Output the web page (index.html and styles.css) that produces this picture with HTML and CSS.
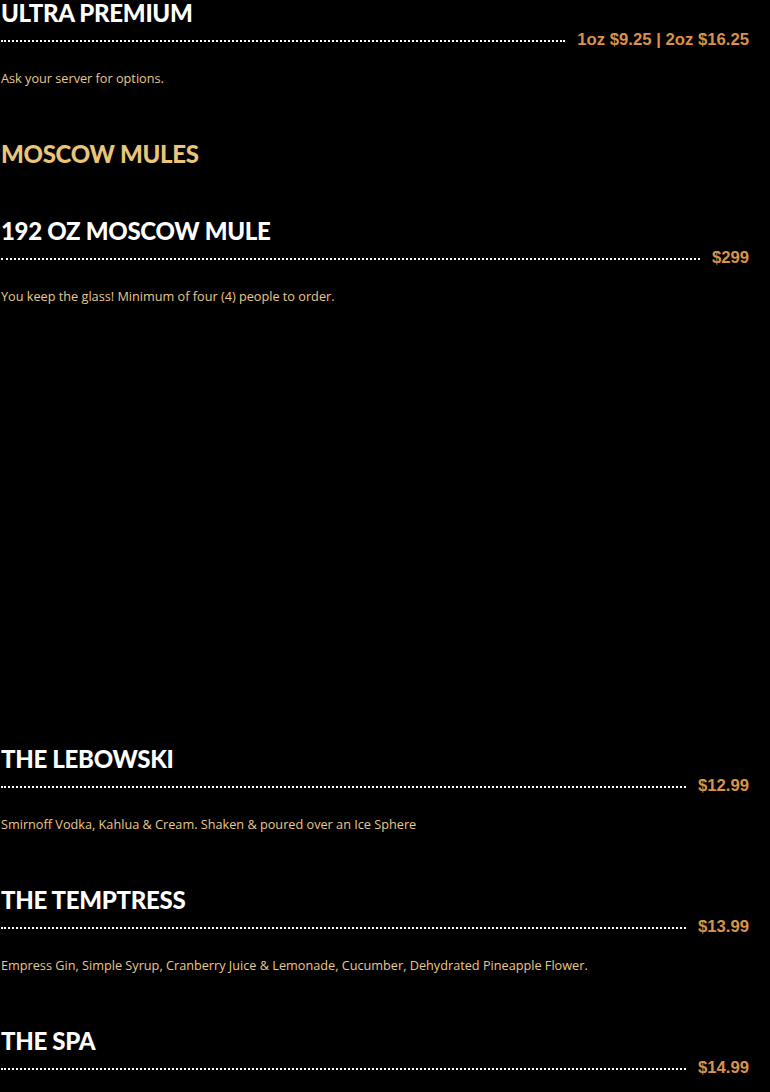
FILE: index.html
```html
<!DOCTYPE html>
<html>
<head>
<meta charset="utf-8">
<link rel="stylesheet" href="styles.css">
</head>
<body>
<div class="menu">
  <div class="item">
    <h3 class="item-name">ULTRA PREMIUM</h3>
    <div class="row"><span class="dots"></span><span class="price">1oz $9.25 | 2oz $16.25</span></div>
    <p class="desc">Ask your server for options.</p>
  </div>

  <h2 class="section">MOSCOW MULES</h2>

  <div class="item">
    <h3 class="item-name">192 OZ MOSCOW MULE</h3>
    <div class="row"><span class="dots"></span><span class="price">$299</span></div>
    <p class="desc">You keep the glass! Minimum of four (4) people to order.</p>
    <div class="photo"></div>
  </div>

  <div class="item">
    <h3 class="item-name">THE LEBOWSKI</h3>
    <div class="row"><span class="dots"></span><span class="price">$12.99</span></div>
    <p class="desc">Smirnoff Vodka, Kahlua &amp; Cream. Shaken &amp; poured over an Ice Sphere</p>
  </div>

  <div class="item">
    <h3 class="item-name">THE TEMPTRESS</h3>
    <div class="row"><span class="dots"></span><span class="price">$13.99</span></div>
    <p class="desc">Empress Gin, Simple Syrup, Cranberry Juice &amp; Lemonade, Cucumber, Dehydrated Pineapple Flower.</p>
  </div>

  <div class="item">
    <h3 class="item-name">THE SPA</h3>
    <div class="row"><span class="dots"></span><span class="price">$14.99</span></div>
  </div>
</div>
</body>
</html>
```

FILE: styles.css
```css
html, body {
  margin: 0;
  padding: 0;
  background: #000;
}
.menu {
  padding: 0 21px 0 1px;
}
.item {
  margin-bottom: 53px;
}
.item-name,
.section {
  margin: 0;
  font-family: "Lato", sans-serif;
  font-weight: 900;
  font-size: 24px;
  line-height: 26px;
  letter-spacing: -0.3px;
  color: #fff;
}
.section {
  color: #e9c57a;
  margin-bottom: 51px;
}
.row {
  display: flex;
  align-items: center;
  gap: 12px;
  height: 20px;
  margin-top: 4px;
}
.dots {
  flex: 1;
  border-bottom: 2px dotted #fff;
  margin-top: 1px;
}
.price {
  font-family: "Liberation Sans", Arial, sans-serif;
  font-weight: 700;
  font-size: 16.7px;
  line-height: 20px;
  color: #d9924a;
}
.desc {
  margin: 18px 0 0;
  font-family: "Open Sans", sans-serif;
  font-size: 12.7px;
  line-height: 20px;
  color: #e9c98e;
}
.photo {
  height: 387px;
}
```
